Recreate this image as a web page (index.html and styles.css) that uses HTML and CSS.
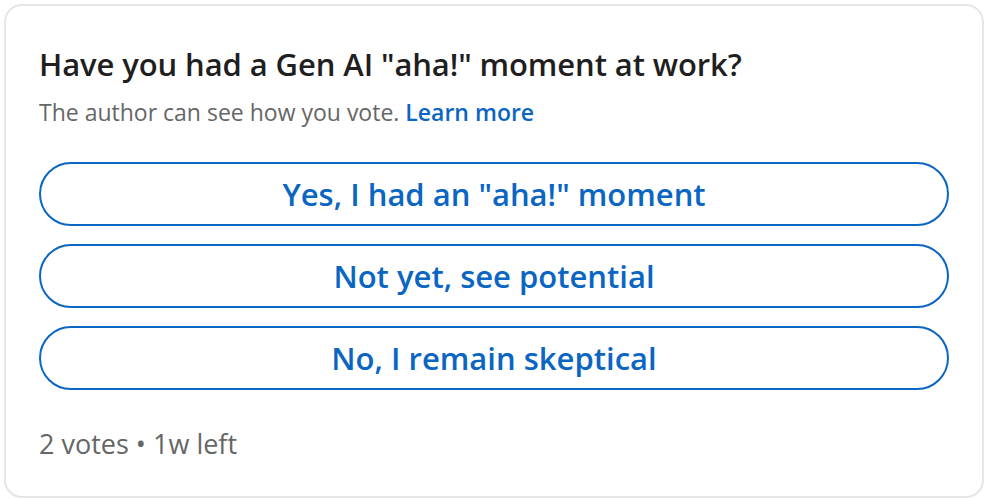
FILE: index.html
```html
<!DOCTYPE html>
<html>
<head>
<meta charset="utf-8">
<link rel="stylesheet" href="styles.css">
</head>
<body>
<div class="card">
  <h2 class="title">Have you had a Gen AI "aha!" moment at work?</h2>
  <p class="sub">The author can see how you vote. <a class="learn" href="#">Learn more</a></p>
  <div class="options">
    <button class="opt">Yes, I had an "aha!" moment</button>
    <button class="opt">Not yet, see potential</button>
    <button class="opt">No, I remain skeptical</button>
  </div>
  <p class="foot">2 votes • 1w left</p>
</div>
</body>
</html>
```
FILE: styles.css
```css
html, body { margin: 0; padding: 0; background: #fff; }
body { font-family: "Open Sans", "Noto Sans", sans-serif; }
.card {
  margin: 4px;
  width: 980px;
  height: 494px;
  box-sizing: border-box;
  border: 2px solid #e6e6e6;
  border-radius: 18px;
  padding: 0 33px;
  display: flex;
  flex-direction: column;
}
.title {
  margin: 38px 0 0 0;
  font-size: 31px;
  font-weight: 600;
  color: #1f1f1f;
  line-height: 40px;
  letter-spacing: -0.1px;
}
.sub {
  margin: 13px 0 0 0;
  font-size: 23px;
  color: #666;
  line-height: 30px;
}
.learn { color: #0a66c2; font-weight: 600; text-decoration: none; }
.options {
  margin-top: 35px;
  display: flex;
  flex-direction: column;
  gap: 18px;
}
.opt {
  height: 64px;
  border: 2px solid #0a66c2;
  border-radius: 32px;
  background: #fff;
  color: #0a66c2;
  font-family: inherit;
  font-size: 31px;
  font-weight: 600;
  padding: 0;
}
.foot {
  margin: 36px 0 0 0;
  font-size: 27px;
  color: #666;
  line-height: 36px;
}
```
